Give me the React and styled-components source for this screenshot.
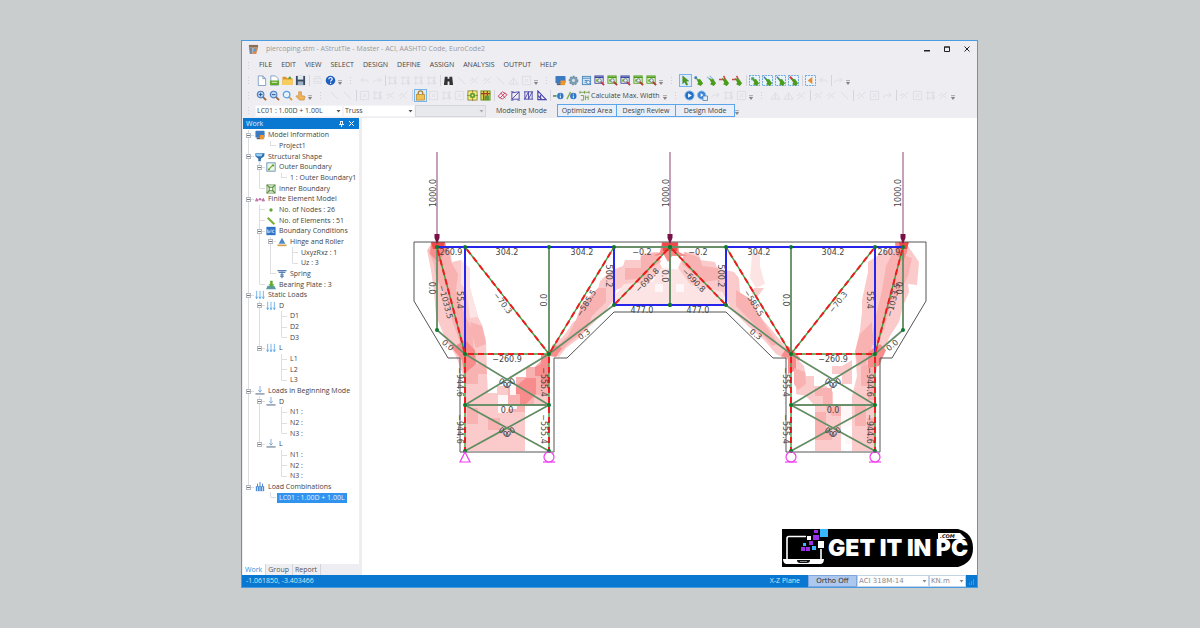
import React from 'react';
import styled, { createGlobalStyle } from 'styled-components';

const GlobalStyle = createGlobalStyle`
  * { box-sizing: border-box; }
  body {
    margin: 0;
    background-color: #c9cdcd;
    font-family: 'Open Sans', 'Noto Sans', sans-serif;
    font-size: 7px;
    line-height: 10px;
    color: #444;
  }
  button, select {
    font: inherit;
    color: inherit;
    margin: 0;
    border-radius: 0;
  }
`;

const Desktop = styled.div`
  display: flex;
  min-height: 100vh;
  padding: 40px 222px 40px 241px;
`;

const Window = styled.div`
  flex: 1;
  min-width: 0;
  display: flex;
  flex-direction: column;
  background-color: #eeeef2;
  border: 1px solid #4a9be0;
`;

const TitleBar = styled.header`
  display: flex;
  align-items: center;
  height: 16px;
  padding: 0 0 0 6px;
  color: #98989c;
`;

const Title = styled.h1`
  flex: 1;
  margin: 0 0 0 7px;
  font-size: 7px;
  font-weight: 400;
`;

const WindowButton = styled.button`
  display: flex;
  align-items: center;
  justify-content: center;
  width: 20px;
  height: 14px;
  padding: 0;
  border: 0;
  background: none;
`;

const MenuBar = styled.nav`
  display: flex;
  align-items: center;
  gap: 9px;
  height: 16px;
`;

const MenuButton = styled.button`
  padding: 0;
  border: 0;
  background: none;
`;

const Toolbar = styled.div`
  display: flex;
  align-items: center;
  height: 15px;
  white-space: nowrap;
`;

const Grip = styled.span`
  flex: none;
  width: ${props => (props.$first ? '13px' : '15px')};
  height: 11px;
  background: radial-gradient(circle, #cfd0d6 0 1px, transparent 1px) center / 3px 3px repeat-y;
`;

const MenuGrip = styled(Grip)`
  margin-right: -5px;
`;

const Slot = styled.button`
  flex: none;
  display: flex;
  align-items: center;
  justify-content: center;
  width: 13px;
  height: 13px;
  padding: 0;
  border: ${props => (props.$selected ? '1px solid #7ab4ee' : '0')};
  background: ${props => (props.$selected ? '#dcebfb' : 'none')};
  svg { flex: none; }
`;

const Divider = styled.span`
  flex: none;
  width: ${props => props.$w || 4}px;
  height: 11px;
  background: linear-gradient(#d4d5da, #d4d5da) center / 1px 100% no-repeat;
`;

const Overflow = styled.span`
  flex: none;
  display: flex;
  justify-content: center;
  width: 6px;
  padding-top: 4px;
`;

const ToolText = styled.button`
  width: 71px;
  padding: 0;
  border: 0;
  background: none;
  text-align: left;
`;

const Combo = styled.span`
  position: relative;
  flex: none;
  width: ${props => props.$w}px;
  height: 12px;
  background-color: ${props => (props.$off ? '#e8e9ec' : '#fff')};
  border: 1px solid ${props => (props.$off ? '#d6d7db' : '#f4f4f6')};

  select {
    display: block;
    width: 100%;
    height: 10px;
    padding: 0 9px 0 1px;
    border: 0;
    background: transparent;
    appearance: none;
    line-height: 10px;
    opacity: 1;
  }

  svg {
    position: absolute;
    right: 1px;
    top: 4px;
    pointer-events: none;
  }
`;

const ModeLabel = styled.span`
  width: 71px;
  text-align: center;
`;

const ModeButton = styled.button`
  width: 60px;
  height: 13px;
  padding: 0;
  margin-right: -1px;
  border: 1px solid #5aa5ec;
  background-color: #e9eff8;
`;

const Body = styled.main`
  flex: 1;
  display: flex;
  min-height: 0;
  padding-left: 1px;
`;

const Side = styled.aside`
  flex: none;
  width: 116px;
  display: flex;
  flex-direction: column;
`;

const PaneHeader = styled.div`
  display: flex;
  align-items: center;
  gap: 5px;
  height: 11px;
  padding: 0 5px 0 3px;
  background-color: #0a78d0;
  color: #e4f1fb;
`;

const PaneTitle = styled.h2`
  flex: 1;
  margin: 0;
  font-size: 7px;
  font-weight: 400;
`;

const TreePane = styled.div`
  flex: 1;
  padding-top: 1px;
  background-color: #fff;
`;

const Tree = styled.ul`
  display: grid;
  grid-auto-rows: 1fr;
  height: 373px;
  margin: 0;
  padding: 0;
  list-style: none;
`;

const TreeRow = styled.li`
  display: flex;
  align-items: center;
  min-height: 0;
  white-space: nowrap;
`;

const Guide = styled.span`
  flex: none;
  align-self: stretch;
  display: flex;
  align-items: center;
  justify-content: center;
  width: 11px;
  background-image: ${props => (props.$line === 'none' ? 'none' : 'linear-gradient(#dedee2, #dedee2)')},
    ${props => (props.$elbow ? 'linear-gradient(#dedee2, #dedee2)' : 'none')};
  background-size: 1px ${props => (props.$line === 'half' ? '50%' : '100%')}, 5px 1px;
  background-position: 5px 0, right center;
  background-repeat: no-repeat;
`;

const TreeIcon = styled.span`
  flex: none;
  display: flex;
  justify-content: center;
  width: 11px;
`;

const TreeLabel = styled.span`
  margin-left: 1px;
  padding: 0 2px;
  line-height: 10px;
  color: ${props => (props.$selected ? '#e4f1fb' : '#444')};
  background-color: ${props => (props.$selected ? '#3093ee' : 'transparent')};
`;

const PaneTabs = styled.div`
  display: flex;
  height: 11px;
`;

const PaneTab = styled.button`
  padding: 0 3px 0 2px;
  border: 0;
  border-right: 1px solid #d4d5da;
  background-color: ${props => (props.$active ? '#fff' : 'transparent')};
  color: ${props => (props.$active ? '#2b8fdc' : '#555')};
`;

const Canvas = styled.section`
  position: relative;
  flex: 1;
  min-width: 0;
  margin-left: 3px;
  background-color: #fff;

  > svg {
    display: block;
    width: 100%;
    height: 100%;
  }
`;

const Watermark = styled.div`
  position: absolute;
  right: 4px;
  bottom: 8px;
  height: 38px;
`;

const StatusBar = styled.footer`
  display: flex;
  align-items: center;
  height: 12px;
  padding: 0 2px 0 4px;
  background-color: #0a78d0;
  color: #cfe6fa;
`;

const Coordinates = styled.span`
  flex: 1;
`;

const StatusToggle = styled.button`
  width: 49px;
  height: 12px;
  margin: 0 0 0 8px;
  padding: 0;
  border: 1px solid #7fa6dc;
  background-color: #adc8ef;
  color: #333;
  font-family: 'DejaVu Sans', sans-serif;
`;

const StatusCombo = styled(Combo)`
  color: #8a8a8e;
  font-family: 'DejaVu Sans', sans-serif;
  border-color: #c4d4e6;
`;

const Arrow = ({ color = '#555' }) => (
  <svg width="5" height="3" viewBox="0 0 5 3"><path d="M0.5 0h4L2.5 2.5z" fill={color} /></svg>
);

const More = () => (
  <Overflow>
    <svg width="4" height="5" viewBox="0 0 4 5"><path d="M0 0.5h4M0.3 2.3h3.4L2 4.5z" stroke="#777" strokeWidth="0.5" fill="#777" /></svg>
  </Overflow>
);

const faint = '#dcdde2';

const cursor = (extra, x = 1, y = 2) => (
  <>
    {extra}
    <path d={`M${x} ${y + 1}l3.500 2 1-1 3.500 5-2.500 3-4-2 1.200-1.500z`} fill="#4c9c1c" />
  </>
);

const dashBox = <rect x="0.500" y="0.500" width="11" height="11" fill="#e8f4fd" stroke="#5b9bd5" strokeDasharray="2 1" />;

const tableIcon = (c) => (
  <>
    <rect x="1" y="1" width="9" height="8" fill="#f4f8dc" stroke={c} />
    <path d="M1 2.500h9" stroke={c} strokeWidth="1.800" />
    <path d="M2 6h5" stroke="#7db83a" strokeWidth="2.500" />
    <circle cx="6" cy="6" r="2" fill="#e4eefa" stroke="#567" strokeWidth="0.800" />
    <path d="M7.500 7.500l3.500 3.500" stroke={c === '#4c9c1c' ? '#b03a2a' : '#c03a4a'} strokeWidth="2" fill="none" />
  </>
);

const magnifier = (mark) => (
  <>
    <path d="M7 7l4 4" stroke="#a06438" strokeWidth="2" />
    <circle cx="5" cy="5" r="3.6" fill="#b9d8f4" stroke="#4c7fc0" strokeWidth="1.2" />
    <path d={mark} stroke="#27508c" />
  </>
);

const downArrows = (c) => (
  <path d="M2 1v9M6 1v9M10 1v9M0.8 8l1.2 2.5L3.2 8M4.8 8L6 10.5 7.2 8M8.8 8l1.2 2.5L11.2 8" stroke={c} fill="none" strokeWidth="0.9" />
);

const shapes = {
  doc: <path d="M2.5 1h5l3 3v7.5h-8zM7.5 1v3h3" fill="#fff" stroke="#7f9cc4" />,
  docGreen: <><path d="M2 1h5l3 3v7H2z" fill="#fff" stroke="#7f9cc4" /><path d="M1 6h10v5H1z" fill="#61a82a" /><path d="M3 8h6" stroke="#e4f4d4" /></>,
  folder: <><path d="M0.5 2h4l1 1.5h6V11h-11z" fill="#e2952b" /><path d="M1 5h11l-1 6H0.5z" fill="#f9cd5c" /><path d="M6 4l3-3 1 3" fill="#4c9c1c" /></>,
  save: <><path d="M1 1h10v10H1z" fill="#3c4a60" /><path d="M3 1h6v4H3z" fill="#dfe7f0" /><path d="M3 7h6v4H3z" fill="#9fb1c6" /></>,
  help: <><circle cx="6" cy="6" r="5.2" fill="#1e5fc2" /><path d="M4.2 4.6c0-2.6 3.8-2.4 3.6 0-.1 1.2-1.7 1.3-1.7 2.6M6.1 8.4v1.3" stroke="#fff" strokeWidth="1.3" fill="none" /></>,
  print: <path d="M2 4h8v5H2zM3.500 4V1.500h5V4M3.500 7h5" stroke={faint} fill="none" />,
  binoculars: <path d="M2 2h3v2h2V2h3l1 9H7V7H5v4H1z" fill="#333" />,
  undo: <path d="M5 3L2 5.500l3 2.500M2 5.500h6q2 0 2 3" stroke={faint} fill="none" />,
  redo: <path d="M7 3l3 2.500L7 8M10 5.500H4q-2 0-2 3" stroke={faint} fill="none" />,
  nodes: <><path d="M3 1v10M9 1v10M1 3h10M1 9h10" stroke={faint} fill="none" /><path d="M8 5l2 4" stroke={faint} strokeWidth="2" /></>,
  line: <path d="M2 2l8 8" stroke={faint} />,
  diag: <path d="M2 10l8-8M3 3l6 6M1 6l3-1" stroke={faint} fill="none" />,
  tri: <path d="M1 10L6 3l5 7zM6 3v7" stroke={faint} fill="none" />,
  frame: <path d="M1.500 1.500h9v9h-9zM4 8l4-4M4 4l4 4" stroke={faint} fill="none" />,
  hand: <path d="M4 2h3v4l4 1-1 4H5L1 7l1-1 2 1z" fill="#f0b35a" stroke="#c07c2c" strokeWidth="0.6" />,
  zoomIn: magnifier('M3 5h4M5 3v4'),
  zoomOut: magnifier('M3 5h4'),
  zoomFit: <><path d="M7 7l4 4" stroke="#e09a3a" strokeWidth="2" /><circle cx="5" cy="5" r="3.600" fill="#e5f2fd" stroke="#5aa0e0" strokeWidth="1.400" /></>,
  lock: <><path d="M3.500 6V4q0-3 2.500-3t2.500 3v2" fill="none" stroke="#a98738" strokeWidth="1.500" /><rect x="1.500" y="5" width="9" height="6" fill="#efc252" stroke="#ad8427" strokeWidth="0.700" /></>,
  target: <><rect x="1" y="1" width="10" height="10" fill="#f7ec70" stroke="#8c8a4a" /><circle cx="6" cy="6" r="3" fill="#5ba03b" /><path d="M6 0v3M6 9v3M0 6h3M9 6h3" stroke="#8c762a" strokeWidth="0.800" /><circle cx="6" cy="6" r="1" fill="#f7ec70" /></>,
  mesh: <><rect x="1" y="1" width="10" height="10" fill="#e7d44a" stroke="#6b8e23" /><path d="M4 1v10M8 1v10M1 4h10" stroke="#a43a28" strokeWidth="1.300" /><path d="M5 6h5v5H5z" fill="#5b9a34" /></>,
  redTruss: <path d="M1 7l5-5 5 3-5 5zM4 3l5 6M3 9l6-6" stroke="#c43c5c" fill="none" />,
  truss: <path d="M2 3l8-1v8H2zM2 10l8-8M1 11h3M1 2h3M8 11h3" stroke="#4a46a8" fill="none" />,
  truss2: <path d="M1 2h10M1 10h10M2 2v8M6 2v8M10 2v8M2 10l4-8M6 10l4-8" stroke="#4a46a8" fill="none" />,
  truss3: <path d="M2 1v9.500h9zM2 6l4 4M5 4v6" stroke="#4a46a8" fill="none" strokeWidth="1.200" />,
  info: <><circle cx="8" cy="6.500" r="3.500" fill="#2e78c8" /><path d="M8 4v1M8 6v3" stroke="#fff" /><path d="M0 6.500h4" stroke="#357a4a" strokeWidth="1.500" /></>,
  infoSlash: <><path d="M1 10l4-8" stroke="#8bb03a" strokeWidth="1.500" /><circle cx="8" cy="6.500" r="3.500" fill="#2e78c8" /><path d="M8 4v1M8 6v3" stroke="#fff" /></>,
  ruler: <path d="M1 2.500h10M1 1v3M6 1v3M11 1v3M2 6h3v5H2M7 6v5M10 6v5M7 8h3" stroke="#78a04a" fill="none" />,
  monitor: <><rect x="0.500" y="1" width="11" height="8" rx="1" fill="#3c7ac2" /><path d="M2 9h8v2H2z" fill="#555e70" /><path d="M6 6h5v5H6z" fill="#f0952d" /></>,
  gear: <><circle cx="6" cy="6" r="4.500" fill="#7fa0b4" stroke="#6d8fa4" strokeDasharray="2 1.300" strokeWidth="1.500" /><circle cx="6" cy="6" r="1.600" fill="#dce6ec" /></>,
  sheet: <><rect x="1.500" y="1.500" width="9" height="9" fill="#cfe4f6" stroke="#4b86bd" /><path d="M2 3.500h8M4 6h3M4 8h2" stroke="#4b86bd" /><circle cx="8" cy="8" r="2" fill="#e8f2fb" stroke="#4b86bd" /></>,
  tableBlue: tableIcon('#3c48a8'),
  tableGreen: tableIcon('#4c9c1c'),
  select: <path d="M3 1l6.500 5.500-3 .3 2 3.600-1.500.8-2-3.700L3 9.500z" fill="#4c9c1c" stroke="#39731a" strokeWidth="0.500" />,
  selNode: cursor(<circle cx="3" cy="3" r="1.600" fill="#3a7ad0" />, 3),
  selPair: cursor(<path d="M1 2l6 5M4 1l5 5" stroke="#8cb8e6" strokeWidth="1.300" />, 3),
  selRed: cursor(<path d="M0 5h7M5 1l2 4" stroke="#c84a4a" strokeWidth="1.600" />, 3),
  boxNode: cursor(<>{dashBox}<circle cx="4" cy="4" r="2" fill="#6ab0a0" /></>, 3),
  boxLine: cursor(<>{dashBox}<path d="M2 2l5 5" stroke="#3c70b4" strokeWidth="1.500" /></>, 3),
  boxRed: cursor(<>{dashBox}<path d="M2 2l5 5" stroke="#d03838" strokeWidth="2.200" /></>, 3),
  back: <>{dashBox}<path d="M8 2v8L3 6z" fill="#ee8a34" /></>,
  play: <><circle cx="6" cy="6" r="5" fill="#2472c8" stroke="#84b8ec" /><path d="M4.500 3.500v5l4-2.500z" fill="#fff" /></>,
  playDoc: <><circle cx="5" cy="5.500" r="4.500" fill="#3d86d4" stroke="#8cbef0" /><path d="M4 3.500v4l3-2z" fill="#fff" /><path d="M6.500 6.500h5v5h-5z" fill="#e4eefa" stroke="#3d76b4" strokeWidth="0.800" /></>,
  app: <><path d="M1 1h10v3H1z" fill="#8a6f58" /><path d="M1 4h4v7H2z" fill="#7e8896" /><path d="M6 4h5L9 11H5z" fill="#e08a4a" /><path d="M6 5h3v3H6z" fill="#4aa0d8" /></>,
  shape: <><path d="M0.500 1.500h11L11 5 7 8v3H4V8L0.500 5z" fill="#2f6fb0" /><path d="M1 2h8L8 5H2z" fill="#9ad0f2" /></>,
  outer: <><rect x="1" y="1" width="10" height="10" fill="#eef8e4" stroke="#5a86b0" /><path d="M3.500 8.500l5-5" stroke="#6cac3c" strokeWidth="1.500" /><path d="M2.500 8h2v2h-2zM7.500 3h2v2h-2z" fill="#4c9c1c" /></>,
  inner: <><rect x="1" y="1" width="10" height="10" fill="#cfe5bd" stroke="#88a878" /><path d="M1 1l3 3M11 1L8 4M1 11l3-3M11 11L8 8" stroke="#5a8a48" strokeWidth="1.500" /><rect x="4" y="4" width="4" height="4" fill="#f4faee" stroke="#5a8a48" /></>,
  fem: <><path d="M2 7h8" stroke="#d06a9a" /><path d="M0.500 8.500L2 5l1.500 3.500zM8.500 8.500L10 5l1.500 3.500z" fill="#d88ab8" stroke="#a8589c" strokeWidth="0.700" /><path d="M5 6h2" stroke="#9c4c8c" strokeWidth="2" /></>,
  dot: <circle cx="6" cy="6" r="2" fill="#63a532" />,
  element: <path d="M2 2l8 8" stroke="#7cb03a" strokeWidth="2.600" />,
  conditions: <><rect x="0.500" y="1" width="11" height="10" fill="#2d72c8" /><path d="M2 4v4h2V6H2M6 4v4M10 5H8v3h2" stroke="#dceafb" fill="none" strokeWidth="0.900" /></>,
  hinge: <><path d="M6 1l4 7H2z" fill="#4c88c8" /><path d="M0.500 9h11v2H0.500z" fill="#d5a04c" /></>,
  spring: <path d="M0.500 2h11M2 4h8M6 3v8M4 7h4M4 9h4" stroke="#5680b4" strokeWidth="1.400" />,
  bearing: <><path d="M2 7h8l2 4H0z" fill="#5c98a8" /><path d="M5 1h3v4h2L6.500 9 3 5h2z" fill="#60aa2c" /></>,
  loads: downArrows('#4c9fe4'),
  begin: <><path d="M6 0v7M4 5l2 2.500L8 5" stroke="#6ca0dc" fill="none" /><path d="M0.500 9.500h11" stroke="#98a5b4" strokeWidth="2" /></>,
  combos: <><path d="M1 5h10v6H1z" fill="#4b8bd8" /><path d="M3 2v3M6 0v5M9 2v3" stroke="#3070c0" /><path d="M3 6v5M6 6v5M9 6v5" stroke="#d4e6fa" /></>,
};

const Icon = ({ name, size = 12 }) => (
  <svg width={size} height={size} viewBox="0 0 12 12" fill="none" aria-hidden="true">{shapes[name]}</svg>
);

// "|" draws a divider, "v" the overflow arrow and ":" the grip of the next group
const standardTools = [
  'doc', 'docGreen', 'folder', 'save', '|', 'print', 'help', 'v', ':',
  'undo', 'redo', '|2', 'nodes', 'nodes', 'nodes', 'nodes', '|', 'binoculars',
  'line', 'diag', 'diag', 'line', 'tri', 'frame', 'v', ':',
  'monitor', 'gear', 'sheet', 'tableBlue', 'tableGreen', 'tableBlue', 'tableGreen', 'tableGreen', 'v', ':',
  '*select', 'selNode', 'selPair', 'selRed', 'selRed', '|',
  'boxNode', 'boxLine', 'boxLine', 'boxRed', '|', 'back', 'undo', '|2', 'redo', 'v',
];

const viewTools = [
  'zoomIn', 'zoomOut', 'zoomFit', 'hand', 'v', ':',
  'line', 'line', '|', 'frame', 'nodes', 'diag', 'diag', '|', '*lock', 'frame', 'nodes', 'frame',
  'target', 'mesh', '|', 'redTruss', 'truss', 'truss2', 'truss3', '|',
  'info', 'infoSlash', 'ruler', 'text', 'v', ':',
  'play', 'playDoc', 'redo', 'nodes', 'frame', 'v', ':',
  'tri', 'tri', 'diag', '|', 'diag', 'diag', 'line', '|', 'diag', 'frame', 'redo', '|',
  'diag', 'frame', 'nodes', 'diag', 'v',
];

const ToolItem = ({ item }) => {
  if (item === 'v') return <More />;
  if (item === ':') return <Grip />;
  if (item === 'text') return <ToolText>Calculate Max. Width</ToolText>;
  if (item[0] === '|') return <Divider $w={item[1]} />;
  const selected = item[0] === '*';
  const name = selected ? item.slice(1) : item;
  return (
    <Slot $selected={selected} aria-label={name}>
      <Icon name={name} size={11} />
    </Slot>
  );
};

const ToolRow = ({ items }) => (
  <Toolbar>
    <Grip $first />
    {items.map((item, i) => <ToolItem key={i} item={item} />)}
  </Toolbar>
);

const menus = ['FILE', 'EDIT', 'VIEW', 'SELECT', 'DESIGN', 'DEFINE', 'ASSIGN', 'ANALYSIS', 'OUTPUT', 'HELP'];

// [level, label, icon, expandable]
const treeRows = [
  [0, 'Model Information', 'monitor', true],
  [2, 'Project1'],
  [0, 'Structural Shape', 'shape', true],
  [1, 'Outer Boundary', 'outer', true],
  [3, '1 : Outer Boundary1'],
  [1, 'Inner Boundary', 'inner'],
  [0, 'Finite Element Model', 'fem', true],
  [1, 'No. of Nodes : 26', 'dot'],
  [1, 'No. of Elements : 51', 'element'],
  [1, 'Boundary Conditions', 'conditions', true],
  [2, 'Hinge and Roller', 'hinge', true],
  [4, 'UxyzRxz : 1'],
  [4, 'Uz : 3'],
  [2, 'Spring', 'spring'],
  [1, 'Bearing Plate : 3', 'bearing'],
  [0, 'Static Loads', 'loads', true],
  [1, 'D', 'loads', true],
  [3, 'D1'],
  [3, 'D2'],
  [3, 'D3'],
  [1, 'L', 'loads', true],
  [3, 'L1'],
  [3, 'L2'],
  [3, 'L3'],
  [0, 'Loads in Beginning Mode', 'begin', true],
  [1, 'D', 'begin', true],
  [3, 'N1 :'],
  [3, 'N2 :'],
  [3, 'N3 :'],
  [1, 'L', 'begin', true],
  [3, 'N1 :'],
  [3, 'N2 :'],
  [3, 'N3 :'],
  [0, 'Load Combinations', 'combos', true],
  [2, 'LC01 : 1.00D + 1.00L'],
];

const hasNext = (index, level) => {
  for (let i = index + 1; i < treeRows.length; i += 1) {
    if (treeRows[i][0] === level) return true;
    if (treeRows[i][0] < level) return false;
  }
  return false;
};

const Expander = () => (
  <svg width="5" height="5" viewBox="0 0 5 5" aria-hidden="true">
    <rect x="0.5" y="0.5" width="4" height="4" fill="#fff" stroke="#b4b8c0" />
    <path d="M1 2.500h3" stroke="#777" />
  </svg>
);

const TreeItem = ({ row, index }) => {
  const [level, label, icon, expandable] = row;
  const guides = Array.from({ length: level }, (_, l) => (hasNext(index, l) ? 'full' : 'none'));
  return (
    <TreeRow>
      {guides.map((line, l) => <Guide key={l} $line={line} />)}
      <Guide $line={hasNext(index, level) ? 'full' : 'half'} $elbow>
        {expandable && <Expander />}
      </Guide>
      {icon && <TreeIcon><Icon name={icon} size={10} /></TreeIcon>}
      <TreeLabel $selected={label.startsWith('LC01')}>{label}</TreeLabel>
    </TreeRow>
  );
};

const mirror = x => 1340 - x;

const pale = '#fde4e4';
const light = '#fbcaca';
const mid = '#f9b2b2';
const strong = '#f88c8c';
const red = '#f34848';

const stress = [
  // left cantilever and outer leg
  [light, '427,250 432,243 450,250 452,262 461,260 461,268 470,268 470,288 478,317 482,325 486,340 487,376 488,393 497,393 497,386 508,386 508,404 525,404 525,451 466,451 465,380 456,356 446,340 436,316 434,292 431,270'],
  [mid, '428,250 449,249 451,262 458,274 456,290 463,310 472,330 474,352 462,348 452,320 446,296 436,278 434,264'],
  [pale, '461,260 470,268 470,288 478,317 470,318 466,290 461,284'],
  [mid, '470,322 482,326 486,344 476,348 472,336'],
  [mid, '466,364 486,364 487,374 478,374 478,384 466,384'],
  [mid, '467,408 478,408 478,424 467,424'],
  [mid, '488,418 500,418 500,430 488,430'],
  [mid, '508,404 525,404 525,412 508,412'],
  [strong, '452,348 465,340 475,350 476,364 464,374 462,360'],
  [mid, '508,386 516,386 516,377 526,377 526,367 535,367 549,352 549,395 534,395 534,404 508,404'],
  [strong, '516,386 526,378 536,378 536,394 526,404 520,404 520,394 516,394'],
  [strong, '535,367 541,364 541,354 549,354 549,386 541,386 541,376 535,376'],
  [light, '534,395 549,395 549,404 534,404'],
  [strong, '431,242 445,242 447,250 438,262 430,254'],
  [red, '431,242 445,242 443,249 433,249'],
  // middle arches
  [light, '655,252 641,254 640,260 625,260 623,266 612,270 600,281 597,293 588,304 581,318 573,322 566,333 556,344 549,354 559,357 566,348 578,339 590,326 602,315 614,300 616,290 626,286 648,284 662,268'],
  [pale, '624,284 652,282 662,268 684,270 690,284 714,284 724,296 724,304 614,304 614,296'],
  [mid, '582,304 598,288 606,288 606,302 592,316 586,330 570,342 560,352 552,350 568,336 576,320'],
  [mid, '641,256 658,252 661,262 650,268 648,278 625,280 625,268 641,268'],
  [light, '685,252 699,254 700,260 715,262 717,268 734,272 739,278 740,293 752,304 758,314 770,328 780,340 788,350 788,360 776,354 764,340 748,326 732,310 722,292 690,284 678,268'],
  [mid, '684,252 700,258 702,266 718,268 718,280 704,282 694,274 682,264'],
  [mid, '736,290 752,300 762,320 778,344 772,346 754,324 736,306'],
  [pale, '752,254 760,252 760,266 765,284 756,288 750,278'],
  [light, '754,288 764,288 758,296 752,294'],
  [strong, '662,242 678,242 679,252 687,256 672,256 668,262 664,255 654,256 660,252'],
  [red, '662,243 678,243 677,251 663,251'],
  // right inner leg
  [strong, '549,356 556,357 562,348 553,344'],
  [strong, '781,356 788,346 793,350 800,358 796,370 788,374 788,358'],
  [light, '796,358 804,366 806,376 814,376 814,386 826,386 833,392 833,404 841,406 841,451 815,451 815,406 806,396 796,394 796,386'],
  [mid, '794,368 805,372 806,384 798,390 794,384'],
  [mid, '815,388 832,388 832,404 823,404 823,396 815,396'],
  [mid, '815,412 826,412 826,428 832,428 832,440 815,440'],
  [mid, '824,404 841,406 841,416 832,416'],
  [light, '842,366 852,360 852,384 842,384 842,374 832,374 832,366'],
  // right cantilever and outer leg
  [light, '862,312 862,300 868,272 868,262 880,254 894,246 908,246 919,262 917,285 908,284 909,292 903,306 899,322 890,336 884,350 880,356 876,372 876,451 852,451 852,396 857,376 855,352 860,330'],
  [mid, '886,266 893,252 912,258 908,276 900,292 890,306 884,330 876,346 870,344 876,316 882,290'],
  [mid, '855,352 860,334 872,322 872,346 866,364 858,366'],
  [mid, '861,366 876,362 876,400 868,400 868,386 861,386'],
  [mid, '855,406 866,406 866,426 855,426'],
  [mid, '867,418 876,418 876,440 867,440'],
  [strong, '868,352 880,344 886,350 879,366 868,368'],
  [strong, '895,242 908,242 907,252 903,262 896,254'],
  [red, '899,242 909,242 907,249 900,249'],
];

const blanks = [[498, 395, 10, 18], [510, 386, 6, 9], [508, 404, 9, 5], [842, 404, 10, 22], [845, 436, 7, 8], [655, 284, 8, 8], [676, 284, 8, 8]];

const halfBlue = ['437,247 614,247 614,305 670,305', '465,247 465,354'];
const halfGreen = [
  [549, 247, 549, 354], [437, 247, 437, 330], [437, 330, 465, 354], [549, 354, 614, 305],
  [614, 247, 670, 247], [670, 247, 670, 305], [465, 405, 549, 405],
  [465, 354, 549, 405], [465, 405, 549, 354], [465, 405, 549, 451], [465, 451, 549, 405],
];
const halfStruts = [
  [437, 247, 465, 354], [465, 247, 549, 354], [465, 354, 549, 354], [549, 354, 614, 247],
  [670, 247, 614, 305], [465, 354, 465, 451], [549, 354, 549, 451],
];
const halfNodes = [
  [437, 247], [465, 247], [549, 247], [614, 247], [670, 247], [437, 330], [465, 354],
  [549, 354], [614, 305], [670, 305], [465, 405], [549, 405], [465, 451], [549, 451],
];

// [text, x, y, angle]
const labels = [
  ['260.9', 451, 252, 0], ['304.2', 507, 252, 0], ['304.2', 582, 252, 0], ['−0.2', 642, 252, 0],
  ['−0.2', 698, 252, 0], ['304.2', 759, 252, 0], ['304.2', 833, 252, 0], ['260.9', 889, 252, 0],
  ['477.0', 642, 310, 0], ['477.0', 698, 310, 0], ['−260.9', 507, 359, 0], ['−260.9', 833, 359, 0],
  ['0.0', 507, 410, 0], ['0.0', 833, 410, 0],
  ['0.0', 432, 288, 90], ['−1033.5', 446, 302, 75], ['55.4', 460, 300, 90], ['−70.3', 503, 303, 52],
  ['0.0', 544, 300, -90], ['−585.5', 586, 303, -58], ['500.2', 609, 276, 90], ['0.3', 584, 334, -36],
  ['0.0', 448, 345, 40], ['−690.8', 647, 280, -46], ['−690.8', 694, 280, 46], ['0.0', 665, 276, 90],
  ['−944.6', 460, 382, 90], ['−944.6', 460, 429, 90], ['−555.4', 544, 382, 90], ['−555.4', 544, 429, 90],
  ['500.2', 721, 276, 90], ['−585.5', 754, 303, 58], ['0.3', 756, 334, 36], ['0.0', 786, 300, 90],
  ['−70.3', 838, 302, -52], ['55.4', 870, 300, 90], ['−1033.5', 893, 300, -75], ['0.0', 899, 288, 90],
  ['0.0', 892, 345, -40], ['−555.4', 786, 382, 90], ['−555.4', 786, 429, 90],
  ['−944.6', 870, 382, 90], ['−944.6', 870, 429, 90],
  ['0.0', 505, 383, 30], ['0.0', 509, 383, -30], ['0.0', 505, 432, 30], ['0.0', 509, 432, -30],
  ['0.0', 831, 383, 30], ['0.0', 835, 383, -30], ['0.0', 831, 432, 30], ['0.0', 835, 432, -30],
  ['1000.0', 433, 193, -90], ['1000.0', 666, 193, -90], ['1000.0', 898, 193, -90],
];

const bothSides = lines => [...lines, ...lines.map(([a, b, c, d]) => [mirror(a), b, mirror(c), d])];

const Diagram = () => (
  <svg viewBox="362 118 615 457" role="img" aria-label="Strut and tie model">
    {stress.map(([fill, points], i) => <polygon key={i} points={points} fill={fill} />)}
    {blanks.map(([x, y, w, h], i) => <rect key={i} x={x} y={y} width={w} height={h} fill="#fff7f7" />)}
    <polygon
      points="414,242 926,242 926,301 892,358 880,358 880,452 786,452 786,358 773,358 726,312 614,312 567,358 554,358 554,452 460,452 460,358 448,358 414,301"
      fill="none"
      stroke="#555"
    />
    {bothSides(halfGreen).map(([x1, y1, x2, y2], i) => (
      <g key={i}>
        <line x1={x1} y1={y1} x2={x2} y2={y2} stroke="#858a85" strokeWidth="1.8" />
        <line x1={x1} y1={y1} x2={x2} y2={y2} stroke="#3f9a3f" strokeWidth="0.8" />
      </g>
    ))}
    {halfBlue.map((points, i) => (
      <g key={i} fill="none" stroke="#2626ea" strokeWidth="2">
        <polyline points={points} />
        <polyline points={points} transform="matrix(-1 0 0 1 1340 0)" />
      </g>
    ))}
    {bothSides(halfStruts).map(([x1, y1, x2, y2], i) => (
      <g key={i}>
        <line x1={x1} y1={y1} x2={x2} y2={y2} stroke="#3f9a3f" strokeWidth="1.4" />
        <line x1={x1} y1={y1} x2={x2} y2={y2} stroke="#ee1c1c" strokeWidth="2" strokeDasharray="6 4" strokeDashoffset="-3" />
      </g>
    ))}
    {halfNodes.map(([x, y]) => (
      <g key={`${x}-${y}`} fill="#0f7a2c">
        <circle cx={x} cy={y} r="2" />
        <circle cx={mirror(x)} cy={y} r="2" />
      </g>
    ))}
    {[437, 670, 903].map(x => (
      <g key={x}>
        <line x1={x} y1="152" x2={x} y2="242" stroke="#b88aa6" strokeWidth="1.6" />
        <path d={`M${x - 2.5} 234h5v4l-2.5 6-2.5-6z`} fill="#7a1048" />
      </g>
    ))}
    <g fill="none" stroke="#f03cf0" strokeWidth="1.2">
      <path d="M465 452l-5 10h10z" />
      {[549, 791, 875].map(x => (
        <g key={x}>
          <circle cx={x} cy="457" r="5" />
          <path d={`M${x - 6} 462h12`} />
        </g>
      ))}
    </g>
    <g fill="#444" fontFamily="DejaVu Sans, sans-serif" fontSize="8" textAnchor="middle">
      {labels.map(([text, x, y, angle], i) => (
        <text key={i} x={x} y={y} dy="3" transform={`rotate(${angle} ${x} ${y})`}>{text}</text>
      ))}
    </g>
  </svg>
);

const Logo = () => (
  <svg width="191" height="38" viewBox="0 0 191 38" role="img" aria-label="Get it in PC .com">
    <path d="M0 0h176q15 4 15 19t-15 19H0z" fill="#000" />
    <path d="M24 7.500H7q-2 0-2 2V30M39 20v10" fill="none" stroke="#fff" strokeWidth="1.600" />
    <path d="M1 30h41q0 5-4 5H5q-4 0-4-5z" fill="#fff" />
    <path d="M15 31h13q0 3-3 3h-7q-3 0-3-3z" fill="#111" />
    <path d="M18 32.500h7" stroke="#888" />
    <path d="M38 0h8v8h-8z" fill="#38b6ff" />
    <path d="M32 1h4v3h-4zM31 6h6v5h-6zM27 12h4v4h-4zM19 18h4v4h-4zM24 18h4v4h-4z" fill="#9b30e8" />
    <path d="M21 14h3v3h-3zM30 17h4v4h-4z" fill="#38b6ff" />
    <path d="M25 7h4v4h-4zM36 12h6v7h-6z" fill="#fff" />
    <path d="M156 4h22l6 6h-28z" fill="#fff" />
    <text x="158" y="9" fontFamily="DejaVu Sans, sans-serif" fontSize="5" fontWeight="700" fontStyle="italic" fill="#111">.COM</text>
    <text x="46" y="27" fontFamily="Inter, sans-serif" fontSize="23" fontWeight="900" fill="#fff">GET IT IN PC</text>
  </svg>
);

const App = () => (
  <>
    <GlobalStyle />
    <Desktop>
      <Window>
        <TitleBar>
          <Icon name="app" size={11} />
          <Title>piercoping.stm - AStrutTie - Master - ACI, AASHTO Code, EuroCode2</Title>
          <WindowButton aria-label="Minimize">
            <svg width="6" height="6" viewBox="0 0 6 6"><path d="M0 4h6v1.500H0z" fill="#222" /></svg>
          </WindowButton>
          <WindowButton aria-label="Maximize">
            <svg width="6" height="6" viewBox="0 0 6 6"><path d="M0.500 1h5v4.500h-5zM0 1h6" fill="none" stroke="#222" /></svg>
          </WindowButton>
          <WindowButton aria-label="Close">
            <svg width="6" height="6" viewBox="0 0 6 6"><path d="M0.500 0.500l5 5M5.500 0.500l-5 5" stroke="#222" /></svg>
          </WindowButton>
        </TitleBar>
        <MenuBar>
          <MenuGrip $first />
          {menus.map(menu => <MenuButton key={menu}>{menu}</MenuButton>)}
        </MenuBar>
        <ToolRow items={standardTools} />
        <ToolRow items={viewTools} />
        <Toolbar>
          <Grip $first />
          <Combo $w={88}>
            <select aria-label="Load combination"><option>LC01 : 1.00D + 1.00L</option></select>
            <Arrow />
          </Combo>
          <Combo $w={72}>
            <select aria-label="Element type"><option>Truss</option></select>
            <Arrow />
          </Combo>
          <Combo $w={71} $off>
            <select aria-label="Section" disabled><option> </option></select>
            <Arrow color="#aaa" />
          </Combo>
          <ModeLabel>Modeling Mode</ModeLabel>
          <ModeButton>Optimized Area</ModeButton>
          <ModeButton>Design Review</ModeButton>
          <ModeButton>Design Mode</ModeButton>
          <More />
        </Toolbar>
        <Body>
          <Side>
            <PaneHeader>
              <PaneTitle>Work</PaneTitle>
              <svg width="5" height="6" viewBox="0 0 5 6"><path d="M1 0.500h3M1.500 0v3M3.500 0v3M0 3.500h5M2.500 3.500V6" stroke="#fff" strokeWidth="0.9" /></svg>
              <svg width="5" height="5" viewBox="0 0 5 5"><path d="M0 0l5 5M5 0L0 5" stroke="#fff" /></svg>
            </PaneHeader>
            <TreePane>
              <Tree>
                {treeRows.map((row, i) => <TreeItem key={i} row={row} index={i} />)}
              </Tree>
            </TreePane>
            <PaneTabs>
              <PaneTab $active>Work</PaneTab>
              <PaneTab>Group</PaneTab>
              <PaneTab>Report</PaneTab>
            </PaneTabs>
          </Side>
          <Canvas>
            <Diagram />
            <Watermark><Logo /></Watermark>
          </Canvas>
        </Body>
        <StatusBar>
          <Coordinates>-1.061850, -3.403466</Coordinates>
          <span>X-Z Plane</span>
          <StatusToggle>Ortho Off</StatusToggle>
          <StatusCombo $w={72}>
            <select aria-label="Design code"><option>ACI 318M-14</option></select>
            <Arrow color="#888" />
          </StatusCombo>
          <StatusCombo $w={37}>
            <select aria-label="Units"><option>KN.m</option></select>
            <Arrow color="#888" />
          </StatusCombo>
          <svg width="9" height="9" viewBox="0 0 9 9"><path d="M7 3h1M5 5h1M7 5h1M3 7h1M5 7h1M7 7h1" stroke="#7db8ea" /></svg>
        </StatusBar>
      </Window>
    </Desktop>
  </>
);

export default App;
